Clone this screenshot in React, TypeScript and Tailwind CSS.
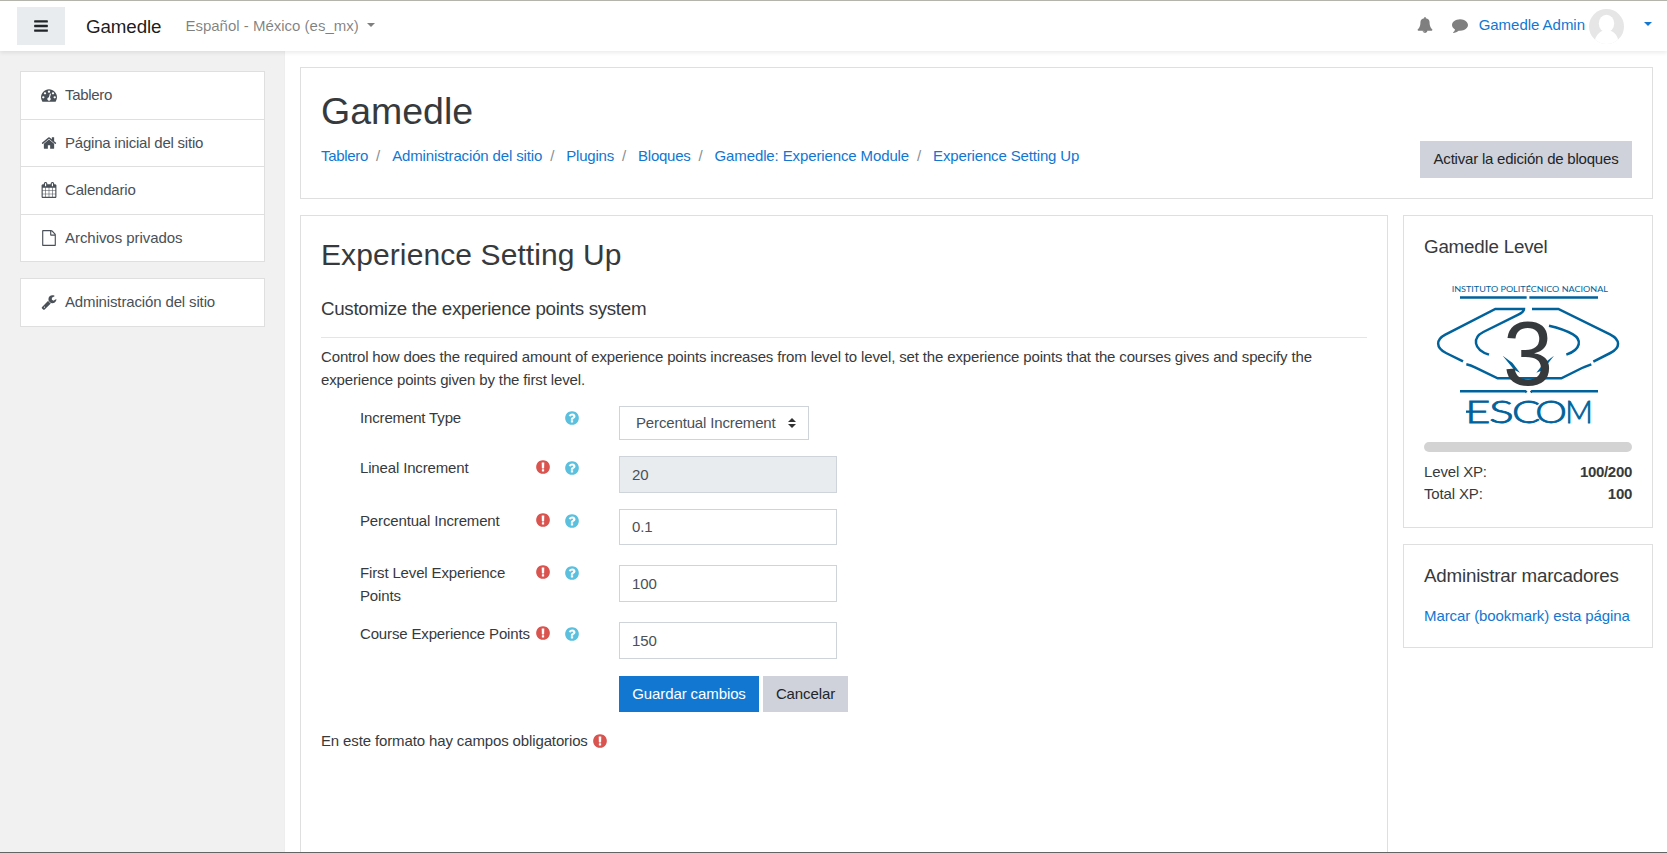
import type { ReactNode } from 'react';

const PATHS = {
  bars: 'M1664 1344v128q0 26-19 45t-45 19h-1408q-26 0-45-19t-19-45v-128q0-26 19-45t45-19h1408q26 0 45 19t19 45zm0-512v128q0 26-19 45t-45 19h-1408q-26 0-45-19t-19-45v-128q0-26 19-45t45-19h1408q26 0 45 19t19 45zm0-512v128q0 26-19 45t-45 19h-1408q-26 0-45-19t-19-45v-128q0-26 19-45t45-19h1408q26 0 45 19t19 45z',
  home: 'M1472 992v480q0 26-19 45t-45 19h-384v-384h-256v384h-384q-26 0-45-19t-19-45v-480q0-1 .5-3t.5-3l575-474 575 474q1 2 1 6zm223-69l-62 74q-8 9-21 11h-3q-13 0-21-7l-692-577-692 577q-12 8-24 7-13-2-21-11l-62-74q-8-10-7-23.5t11-21.5l719-599q32-26 76-26t76 26l244 204v-195q0-14 9-23t23-9h192q14 0 23 9t9 23v408l219 182q10 8 11 21.5t-7 23.5z',
  question:
    'M1024 1376v-192q0-14-9-23t-23-9h-192q-14 0-23 9t-9 23v192q0 14 9 23t23 9h192q14 0 23-9t9-23zm256-672q0-88-55.5-163t-138.5-116-170-41q-243 0-371 213-15 24 8 42l132 100q7 6 19 6 16 0 25-12 53-68 86-92 34-24 86-24 48 0 85.5 26t37.5 59q0 38-20 61t-68 45q-63 28-115.5 86.5t-52.5 125.5v36q0 14 9 23t23 9h192q14 0 23-9t9-23q0-19 21.5-49.5t54.5-49.5q32-18 49-28.5t46-35 44.5-48 28-60.5 12.5-81zm384 192q0 209-103 385.5t-279.5 279.5-385.5 103-385.5-103-279.5-279.5-103-385.5 103-385.5 279.5-279.5 385.5-103 385.5 103 279.5 279.5 103 385.5z',
  exclamation:
    'M896 128q209 0 385.5 103t279.5 279.5 103 385.5-103 385.5-279.5 279.5-385.5 103-385.5-103-279.5-279.5-103-385.5 103-385.5 279.5-279.5 385.5-103zm128 1247v-190q0-14-9-23.5t-22-9.5h-192q-13 0-23 10t-10 23v190q0 13 10 23t23 10h192q13 0 22-9.5t9-23.5zm-2-344l18-621q0-12-10-18-10-8-24-8h-220q-14 0-24 8-10 6-10 18l17 621q0 10 10 17.5t24 7.5h185q14 0 23.5-7.5t10.5-17.5z',
  comment:
    'M1792 896q0 174-120 321.5t-326 233-450 85.5q-70 0-145-8-198 175-460 242-49 14-114 22-17 2-30.5-9t-17.5-29v-1q-3-4-.5-12t2-10 4.5-9.5l6-9 7-8.5 8-9q7-8 31-34.5t34.5-38 31-39.5 32.5-51 27-59 26-76q-157-89-247.5-220t-90.5-281q0-130 71-248.5t191-204.5 286-136.5 348-50.5q244 0 450 85.5t326 233 120 321.5z',
  bell: 'M912 1696q0-16-16-16-59 0-101.5-42.5t-42.5-101.5q0-16-16-16t-16 16q0 73 51.5 124.5t124.5 51.5q16 0 16-16zm816-288q0 52-38 90t-90 38h-448q0 106-75 181t-181 75-181-75-75-181h-448q-52 0-90-38t-38-90q50-42 91-88t85-119.5 74.5-158.5 50-206 19.5-260q0-152 117-282.5t307-158.5q-8-19-8-39 0-40 28-68t68-28 68 28 28 68q0 20-8 39 190 28 307 158.5t117 282.5q0 139 19.5 260t50 206 74.5 158.5 85 119.5 91 88z',
  wrench:
    'M448 1472q0-26-19-45t-45-19-45 19-19 45 19 45 45 19 45-19 19-45zm644-420l-682 682q-37 37-90 37-52 0-91-37l-106-108q-38-36-38-90 0-53 38-91l681-681q39 98 114.5 173.5t173.5 114.5zm634-435q0 39-23 106-47 134-164.5 217.5t-258.5 83.5q-185 0-316.5-131.5t-131.5-316.5 131.5-316.5 316.5-131.5q58 0 121.5 16.5t107.5 46.5q16 11 16 28t-16 28l-293 169v224l193 107q5-3 79-48.5t135.5-81 70.5-35.5q15 0 23.5 10t8.5 25z',
  gauge:
    'M384 1152q0-53-37.5-90.5t-90.5-37.5-90.5 37.5-37.5 90.5 37.5 90.5 90.5 37.5 90.5-37.5 37.5-90.5zm192-448q0-53-37.5-90.5t-90.5-37.5-90.5 37.5-37.5 90.5 37.5 90.5 90.5 37.5 90.5-37.5 37.5-90.5zm428 481l101-382q6-26-7.5-48.5t-38.5-29.5-48 6.5-30 39.5l-101 382q-60 5-107 43.5t-63 98.5q-20 77 20 146t117 89 146-20 89-117q16-60-6-117t-72-91zm660-33q0-53-37.5-90.5t-90.5-37.5-90.5 37.5-37.5 90.5 37.5 90.5 90.5 37.5 90.5-37.5 37.5-90.5zm-640-640q0-53-37.5-90.5t-90.5-37.5-90.5 37.5-37.5 90.5 37.5 90.5 90.5 37.5 90.5-37.5 37.5-90.5zm448 192q0-53-37.5-90.5t-90.5-37.5-90.5 37.5-37.5 90.5 37.5 90.5 90.5 37.5 90.5-37.5 37.5-90.5zm320 448q0 261-141 483-19 29-54 29h-1402q-35 0-54-29-141-221-141-483 0-182 71-348t191-286 286-191 348-71 348 71 286 191 191 286 71 348z',
  calendar:
    'M192 1664h288v-288h-288v288zm352 0h320v-288h-320v288zm-352-352h288v-320h-288v320zm352 0h320v-320h-320v320zm-352-384h288v-288h-288v288zm736 736h320v-288h-320v288zm-384-736h320v-288h-320v288zm768 736h288v-288h-288v288zm-384-352h320v-320h-320v320zm-352-864v-288q0-13-9.5-22.5t-22.5-9.5h-64q-13 0-22.5 9.5t-9.5 22.5v288q0 13 9.5 22.5t22.5 9.5h64q13 0 22.5-9.5t9.5-22.5zm736 864h288v-320h-288v320zm-384-384h320v-288h-320v288zm384 0h288v-288h-288v288zm32-480v-288q0-13-9.5-22.5t-22.5-9.5h-64q-13 0-22.5 9.5t-9.5 22.5v288q0 13 9.5 22.5t22.5 9.5h64q13 0 22.5-9.5t9.5-22.5zm384-64v1280q0 52-38 90t-90 38h-1408q-52 0-90-38t-38-90v-1280q0-52 38-90t90-38h128v-96q0-66 47-113t113-47h64q66 0 113 47t47 113v96h384v-96q0-66 47-113t113-47h64q66 0 113 47t47 113v96h128q52 0 90 38t38 90z',
  file: 'M1596 380q28 28 48 76t20 88v1152q0 40-28 68t-68 28h-1344q-40 0-68-28t-28-68v-1600q0-40 28-68t68-28h896q40 0 88 20t76 48zm-444-244v376h376q-10-29-22-41l-313-313q-12-12-41-22zm384 1528v-1024h-416q-40 0-68-28t-28-68v-416h-768v1536h1280z',
};

type IconName = keyof typeof PATHS;

function Icon({ name, className = '' }: { name: IconName; className?: string }) {
  return (
    <svg viewBox="0 0 1792 1792" fill="currentColor" className={`size-4 shrink-0 ${className}`}>
      <path d={PATHS[name]} />
    </svg>
  );
}

function Caret({ className = '' }: { className?: string }) {
  return (
    <svg viewBox="0 0 8 4" fill="currentColor" className={`h-1 w-2 shrink-0 ${className}`}>
      <path d="M0 0h8L4 4z" />
    </svg>
  );
}

function Navbar() {
  return (
    <header className="relative z-10 flex h-[51px] shrink-0 items-center border-t border-[#b4b4ac] bg-white tracking-normal shadow-[0_2px_4px_rgba(0,0,0,0.08)]">
      <button className="ml-[17px] flex h-[38px] w-12 items-center justify-center bg-[#e9ecef] pb-px text-[#212529]">
        <Icon name="bars" />
      </button>
      <span className="ml-[21px] pt-0.5 text-[18.75px] tracking-[-0.1px] text-black/90">Gamedle</span>
      <button className="ml-[24px] flex items-center text-black/50">
        Español - México (es_mx)
        <Caret className="mb-0.5 ml-2" />
      </button>
      <div className="ml-auto flex items-center">
        <Icon name="bell" className="mr-[19px] mb-0.5 text-[#7f7f7f]" />
        <Icon name="comment" className="mr-[11px] mb-0.5 text-[#7f7f7f]" />
        <a className="pb-px tracking-[-0.03px] text-[#1177d1]">Gamedle Admin</a>
        <svg viewBox="0 0 35 35" className="ml-1 size-[35px]">
          <defs>
            <clipPath id="avatar">
              <circle cx="17.5" cy="17.5" r="17.5" />
            </clipPath>
          </defs>
          <g clipPath="url(#avatar)">
            <rect width="35" height="35" fill="#e6e6e6" />
            <ellipse cx="17.5" cy="14.5" rx="7.7" ry="8.7" fill="#fff" />
            <path d="M5 35C6 26 11 23 13 22h9c3 1 7 4 8 13z" fill="#fff" />
          </g>
        </svg>
        <Caret className="mr-[15px] mb-1 ml-5 text-[#1177d1]" />
      </div>
    </header>
  );
}

interface NavItem {
  icon: IconName;
  label: string;
  tracking: string;
}

function NavGroup({ items }: { items: NavItem[] }) {
  return (
    <nav className="border border-[#dfdfdf] bg-white">
      {items.map((item) => (
        <a
          key={item.label}
          className={`flex h-[47.5px] items-center border-b border-[#dfdfdf] pl-5 text-[#495057] last:h-[46.5px] last:border-b-0 ${item.tracking}`}
        >
          <Icon name={item.icon} className="mr-2" />
          {item.label}
        </a>
      ))}
    </nav>
  );
}

function Card({ className = '', children }: { className?: string; children: ReactNode }) {
  return <section className={`border border-[#dfdfdf] bg-white px-5 ${className}`}>{children}</section>;
}

const CRUMBS = [
  { label: 'Tablero', tracking: 'tracking-[-0.3px]' },
  { label: 'Administración del sitio', tracking: 'tracking-[-0.14px]' },
  { label: 'Plugins', tracking: 'tracking-[-0.2px]' },
  { label: 'Bloques', tracking: 'tracking-[-0.25px]' },
  { label: 'Gamedle: Experience Module', tracking: 'tracking-[-0.12px]' },
  { label: 'Experience Setting Up', tracking: 'tracking-[-0.15px]' },
];

function PageHeader() {
  return (
    <Card className="flex h-[132px] shrink-0 justify-between">
      <div className="pt-[21px]">
        <h1 className="text-[37.5px] leading-[45px] tracking-normal">Gamedle</h1>
        <ol className="mt-[11px] flex">
          {CRUMBS.map((crumb, i) => (
            <li key={crumb.label} className="flex">
              {i > 0 && <span className="pr-3 pl-[8px] text-[#868e96]">/</span>}
              <a className={`text-[#1177d1] ${crumb.tracking}`}>{crumb.label}</a>
            </li>
          ))}
        </ol>
      </div>
      <button className="mt-[73px] h-[37px] w-[212px] bg-[#cfd2da] tracking-[-0.21px] text-[#212529]">
        Activar la edición de bloques
      </button>
    </Card>
  );
}

function FormRow({
  label,
  required = false,
  className = '',
  children,
}: {
  label: string;
  required?: boolean;
  className?: string;
  children: ReactNode;
}) {
  return (
    <div className={`flex pl-[39px] ${className}`}>
      <div className="flex w-[259px] shrink-0 items-start">
        <label className="w-[175px] leading-[23px]">{label}</label>
        <span className="flex w-[30px] justify-start pt-[3px]">
          {required && <Icon name="exclamation" className="text-[#d9534f]" />}
        </span>
        <Icon name="question" className="mt-1 -ml-px text-[#5bc0de]" />
      </div>
      {children}
    </div>
  );
}

function Field({ value, disabled = false }: { value: string; disabled?: boolean }) {
  return (
    <input
      defaultValue={value}
      disabled={disabled}
      className="h-[36.5px] w-[218px] border border-[#ced4da] bg-white px-3 text-[#495057] disabled:bg-[#e9ecef]"
    />
  );
}

function SettingsForm() {
  return (
    <Card className="w-[1088px] pt-[21px]">
      <h2 className="text-[30px] leading-9 tracking-[0.1px]">Experience Setting Up</h2>
      <h3 className="mt-[25px] text-[18.75px] leading-[22.5px] tracking-[-0.3px]">
        Customize the experience points system
      </h3>
      <hr className="mt-4 mb-[7px] border-[#e5e5e5]" />
      <p className="leading-[23px] tracking-[-0.145px]">
        Control how does the required amount of experience points increases from level to level, set the experience
        points that the courses gives and specify the experience points given by the first level.
      </p>
      <form className="mt-[15.5px]">
        <FormRow label="Increment Type" className="h-[50px]">
          <div className="flex h-[34px] w-[190px] items-center justify-between border border-[#ced4da] pr-3 pl-4 text-[#495057]">
            Percentual Increment
            <svg viewBox="0 0 8 10" className="h-2.5 w-2" fill="#333">
              <path d="M0 4h8L4 0zM0 6h8l-4 4z" />
            </svg>
          </div>
        </FormRow>
        <FormRow label="Lineal Increment" required className="h-[52.5px]">
          <Field value="20" disabled />
        </FormRow>
        <FormRow label="Percentual Increment" required className="h-[52.5px]">
          <Field value="0.1" />
        </FormRow>
        <FormRow label="First Level Experience Points" required className="h-[61px]">
          <div className="pt-1">
            <Field value="100" />
          </div>
        </FormRow>
        <FormRow label="Course Experience Points" required className="h-[53.5px]">
          <Field value="150" />
        </FormRow>
        <div className="flex gap-1 pl-[298px] tracking-[-0.1px]">
          <button type="button" className="h-9 w-[140px] bg-[#1177d1] pt-px text-white">
            Guardar cambios
          </button>
          <button type="button" className="h-9 w-[85px] bg-[#cfd2da] pt-px text-[#212529]">
            Cancelar
          </button>
        </div>
      </form>
      <p className="mt-[18px] flex items-center tracking-[-0.13px]">
        En este formato hay campos obligatorios
        <Icon name="exclamation" className="ml-1 text-[#d9534f]" />
      </p>
    </Card>
  );
}

const LOGO_LETTERS = [
  { char: 'E', transform: 'translate(256 668) scale(1.4 1)' },
  { char: 'S', transform: 'translate(327 668) scale(1.5 1)' },
  { char: 'C', transform: 'translate(396 668) scale(1.34 1)' },
  { char: 'O', transform: 'translate(466 668) scale(1.29 1)' },
  { char: 'M', transform: 'translate(556 668) scale(0.98 1)' },
];

function LevelBadge() {
  return (
    <svg viewBox="132 240 624 450" className="mt-[21px] h-[150px] w-[208px] tracking-normal">
      <g fill="none" stroke="#00629b" strokeWidth="7.500">
        <path d="M240 292.500H440M448 292.500H654M240 573.500H436L440 577M452 577L456 573.500H654" />
        <path d="M249 484L198 459C167 444 167 419 196 404L346 327H432C432 335 425 339 415 344L310 396C278 412 278 448 327 464" />
        <path d="M456 327H535L690 403C722 419 722 444 691 459L640 485" />
        <path d="M507 377C538 384 567 396 579 403C605 418 605 448 559 464" />
        <path d="M259 493C269 495 277 498 285 502L353 535H544L606 504C616 499 625 496 634 493" />
      </g>
      <path d="M368 467L397 488L420 518L403 510ZM522 467L490 491L469 518L488 511Z" fill="#00629b" />
      <path d="M258 635H272" stroke="#00629b" strokeWidth="7" />
      <g fill="#00629b" className="font-[Lato,sans-serif]">
        <text x="215" y="275" textLength="469" lengthAdjust="spacingAndGlyphs" fontSize="23">
          INSTITUTO POLITÉCNICO NACIONAL
        </text>
        {LOGO_LETTERS.map((letter) => (
          <text
            key={letter.char}
            transform={letter.transform}
            fontSize="93"
            stroke="#00629b"
            strokeWidth="2.500"
            className="font-light"
          >
            {letter.char}
          </text>
        ))}
      </g>
      <text x="444" y="554" textAnchor="middle" fontSize="270" fill="#373a3c">
        3
      </text>
    </svg>
  );
}

function Blocks() {
  return (
    <aside className="flex w-[250px] flex-col gap-4">
      <Card className="h-[313px] pt-5">
        <h4 className="text-[18.75px] leading-[22.5px] tracking-[-0.2px]">Gamedle Level</h4>
        <LevelBadge />
        <div className="mt-3 h-2.5 rounded-full bg-[#d3d3d3]" />
        <dl className="mt-[9.5px] grid grid-cols-2 leading-[22px]">
          <dt>Level XP:</dt>
          <dd className="text-right font-bold tracking-[-0.3px]">100/200</dd>
          <dt>Total XP:</dt>
          <dd className="text-right font-bold tracking-[-0.3px]">100</dd>
        </dl>
      </Card>
      <Card className="h-[104px] pt-5">
        <h4 className="text-[18.75px] leading-[22.5px] tracking-[-0.2px]">Administrar marcadores</h4>
        <a className="mt-[17px] block whitespace-nowrap tracking-[-0.09px] text-[#1177d1]">
          Marcar (bookmark) esta página
        </a>
      </Card>
    </aside>
  );
}

export default function App() {
  return (
    <div className="flex h-[853px] w-[1667px] flex-col overflow-hidden border-b border-[#646464] bg-white font-['Liberation_Sans',Arial,sans-serif] text-[15px] leading-[22.5px] tracking-[-0.15px] text-[#373a3c]">
      <Navbar />
      <div className="flex min-h-0 grow">
        <aside className="flex w-[285px] shrink-0 flex-col gap-4 border-r border-[#eeeeee] bg-[#f1f1f1] pt-5 pr-[19px] pl-5">
          <NavGroup
            items={[
              { icon: 'gauge', label: 'Tablero', tracking: 'tracking-[-0.3px]' },
              { icon: 'home', label: 'Página inicial del sitio', tracking: 'tracking-[-0.22px]' },
              { icon: 'calendar', label: 'Calendario', tracking: 'tracking-[-0.2px]' },
              { icon: 'file', label: 'Archivos privados', tracking: 'tracking-[-0.05px]' },
            ]}
          />
          <NavGroup
            items={[{ icon: 'wrench', label: 'Administración del sitio', tracking: 'tracking-[-0.14px]' }]}
          />
        </aside>
        <main className="flex grow flex-col gap-4 pt-4 pr-[14px] pl-[15px]">
          <PageHeader />
          <div className="flex h-[700px] shrink-0 justify-between">
            <SettingsForm />
            <Blocks />
          </div>
        </main>
      </div>
    </div>
  );
}
